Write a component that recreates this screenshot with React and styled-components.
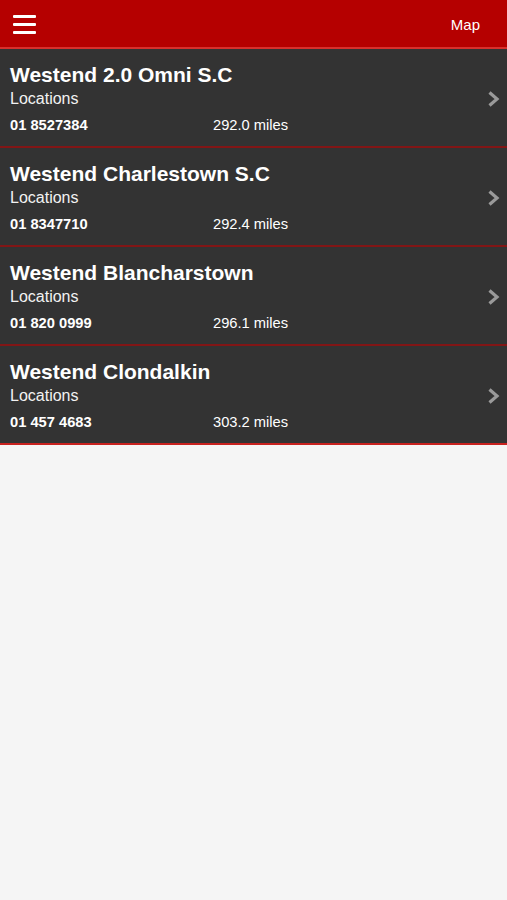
import React from 'react';
import styled, { createGlobalStyle } from 'styled-components';

const GlobalStyle = createGlobalStyle`
  html, body {
    margin: 0;
    padding: 0;
    background: #f5f5f5;
    font-family: "Liberation Sans", Arial, Helvetica, sans-serif;
  }
`;

const stores = [
  { name: 'Westend 2.0 Omni S.C', phone: '01 8527384', distance: '292.0 miles' },
  { name: 'Westend Charlestown S.C', phone: '01 8347710', distance: '292.4 miles' },
  { name: 'Westend Blancharstown', phone: '01 820 0999', distance: '296.1 miles' },
  { name: 'Westend Clondalkin', phone: '01 457 4683', distance: '303.2 miles' }
];

const Page = styled.div`
  min-height: 900px;
  background: #f5f5f5;
`;

const Toolbar = styled.header`
  height: 47px;
  background: #b50000;
  border-bottom: 2px solid #d8302c;
  display: flex;
  align-items: center;
  justify-content: space-between;
  padding: 0 27px 0 13px;
  box-sizing: content-box;
`;

const Burger = styled.button`
  width: 23px;
  height: 19px;
  margin-top: 1px;
  padding: 0;
  border: 0;
  background: transparent;
  display: flex;
  flex-direction: column;
  justify-content: space-between;
  cursor: pointer;

  span {
    display: block;
    height: 3px;
    background: #fff;
    border-radius: 1px;
  }
`;

const MapLink = styled.a`
  color: #fff;
  font-size: 15px;
  text-decoration: none;
  margin-top: 1px;
`;

const List = styled.ul`
  margin: 0;
  padding: 0;
  list-style: none;
`;

const Row = styled.li`
  height: 99px;
  box-sizing: border-box;
  background: #333333;
  border-bottom: 2px solid ${(p) => (p.$last ? '#c8221f' : '#821616')};
  padding: 13px 7px 0 10px;
  display: flex;
  align-items: center;
  color: #fff;
`;

const Info = styled.div`
  flex: 1;
  align-self: flex-start;
`;

const Title = styled.div`
  font-size: 21px;
  font-weight: bold;
  line-height: 26px;
`;

const Subtitle = styled.div`
  font-size: 16px;
  line-height: 20px;
  margin-top: 1px;
  color: #f2f2f2;
`;

const Meta = styled.div`
  display: grid;
  grid-template-columns: 203px auto;
  font-size: 14.7px;
  line-height: 18px;
  margin-top: 7px;
`;

const Phone = styled.span`
  font-weight: bold;
`;

const Chevron = styled.svg`
  width: 13px;
  height: 18px;
  margin-top: -10px;
`;

export default function App() {
  return (
    <Page>
      <GlobalStyle />
      <Toolbar>
        <Burger aria-label="Menu">
          <span />
          <span />
          <span />
        </Burger>
        <MapLink href="#">Map</MapLink>
      </Toolbar>
      <List>
        {stores.map((s, i) => (
          <Row key={s.name} $last={i === stores.length - 1}>
            <Info>
              <Title>{s.name}</Title>
              <Subtitle>Locations</Subtitle>
              <Meta>
                <Phone>{s.phone}</Phone>
                <span>{s.distance}</span>
              </Meta>
            </Info>
            <Chevron viewBox="0 0 13 18">
              <path d="M2.5 2.5 L10 9 L2.5 15.5" fill="none" stroke="#9a9a9a" strokeWidth="3.2" />
            </Chevron>
          </Row>
        ))}
      </List>
    </Page>
  );
}
